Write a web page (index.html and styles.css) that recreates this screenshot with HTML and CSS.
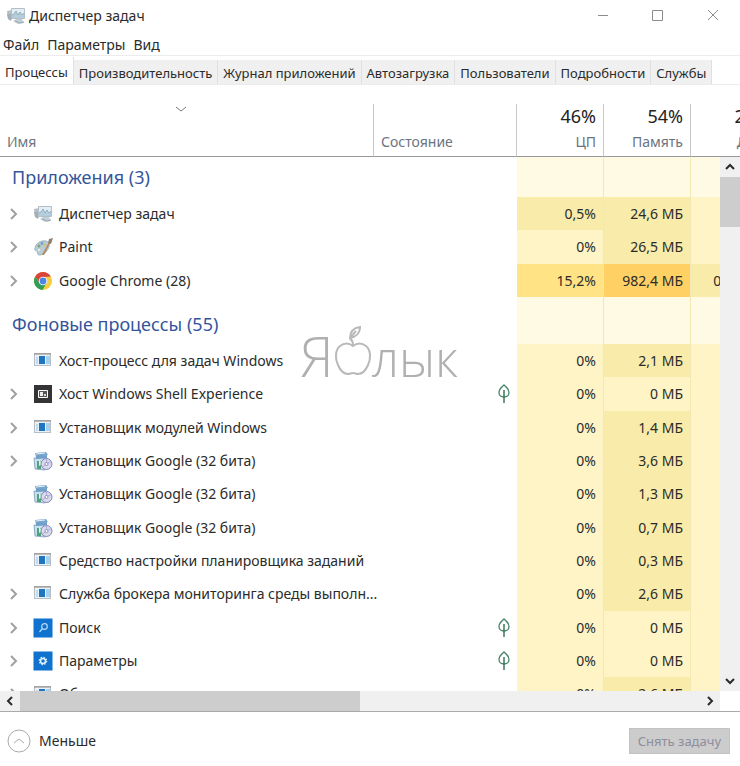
FILE: index.html
```html
<!DOCTYPE html>
<html lang="ru">
<head>
  <meta charset="UTF-8">
  <title>Диспетчер задач</title>
  <meta name="viewport" content="width=device-width, initial-scale=1.0">
  <link rel="stylesheet" href="styles.css">
</head>
<body>
  <!-- icons -->
  <svg class="sprite" aria-hidden="true">
    <symbol id="i-taskmgr" viewBox="0 0 20 20">
      <path d="M1 5l5-1v10l-4-1z" fill="#b4bec4"/>
      <path d="M1 8l4 0v7l-3-2z" fill="#a3aeb5"/>
      <rect x="5" y="2" width="14" height="11" rx="1" fill="#b3bfc6"/>
      <rect x="6" y="3" width="12" height="9" fill="#e2eef4"/>
      <path d="M6 9l2-1 2-3 2 4 2-3 2 3 2-2v5H6z" fill="#b3cddc"/>
      <path d="M6 9l2-1 2-3 2 4 2-3 2 3 2-2" fill="none" stroke="#86a3b5" stroke-width=".8"/>
      <path d="M10 13h6l2 4-6 1-5-3z" fill="#c3cdd3"/>
      <path d="M9 15l5 2 4-1" fill="none" stroke="#93abbb"/>
    </symbol>
    <symbol id="i-paint" viewBox="0 0 20 20">
      <path d="M2 11c1-5 6-8 11-7 4 1 4 5 2 8-2 4-5 6-9 6-2 0-1-3-2-4s-3 0-2-3z" fill="#bacbd3" stroke="#94a8b2" stroke-width=".8"/>
      <circle cx="6" cy="9" r="1.5" fill="#79a779"/>
      <circle cx="9" cy="6.500" r="1.400" fill="#6b9fce"/>
      <circle cx="6" cy="13" r="1.300" fill="#e2ebef"/>
      <circle cx="12" cy="8" r="1.300" fill="#d6c071"/>
      <path d="M9 18L16 5l1 1-6 12z" fill="#b28455"/>
      <path d="M15 6l1-4 4-1-2 6z" fill="#8f8071"/>
    </symbol>
    <symbol id="i-chrome" viewBox="0 0 20 20">
      <circle cx="10" cy="10" r="9" fill="#f6cd3d"/>
      <path d="M2.200 5.500A9 9 0 0 1 17.800 5.500L10 6 6.500 12z" fill="#da4439"/>
      <path d="M2.200 5.500A9 9 0 0 0 9.500 19L13.500 12 6.500 12z" fill="#2f9e58"/>
      <circle cx="10" cy="10" r="4.300" fill="#fff"/>
      <circle cx="10" cy="10" r="3.400" fill="#4c85e6"/>
    </symbol>
    <symbol id="i-app" viewBox="0 0 20 20">
      <rect x="1.500" y="2.500" width="16" height="12" fill="#e9f1f7" stroke="#b7c0c7"/>
      <path d="M1 3h17" stroke="#91867f"/>
      <rect x="6" y="5" width="6" height="8" fill="#1f75c0"/>
      <rect x="3" y="6" width="2" height="7" fill="#c1dcef"/>
      <rect x="13" y="5" width="4" height="8" fill="#a5d1ee"/>
    </symbol>
    <symbol id="i-shell" viewBox="0 0 20 20">
      <rect x="1" y="1" width="18" height="18" fill="#343436"/>
      <path d="M5.500 6.500h9v7h-9z" fill="#555" stroke="#fff"/>
      <rect x="7" y="8" width="3" height="4" fill="#eee"/>
      <rect x="11" y="10" width="2" height="2" fill="#ddd"/>
    </symbol>
    <symbol id="i-setup" viewBox="0 0 20 20">
      <path d="M2 2l11-1 2 3-12 2z" fill="#78a5ca"/>
      <path d="M3 3l9-1" stroke="#e4f2fb"/>
      <path d="M1 7h11v12l-10-1z" fill="#c7deed" stroke="#7a9bb7" stroke-width=".8"/>
      <path d="M3 5l11-1v3L3 8z" fill="#6f9fc8"/>
      <path d="M4 10h4v8H4z" fill="#52a37c"/>
      <path d="M6 9l4 4-4 2z" fill="#dff3e9"/>
      <circle cx="13.500" cy="13" r="5.500" fill="#d8d9ed" stroke="#8589b7"/>
      <path d="M13.500 7.500v5l5-2M13.500 13l-4 3" stroke="#adadda" fill="none"/>
      <circle cx="13.500" cy="13" r="1.500" fill="#fff" stroke="#807fad" stroke-width=".8"/>
    </symbol>
    <symbol id="i-search" viewBox="0 0 20 20">
      <rect x=".5" y=".5" width="19" height="19" fill="#0f72ce"/>
      <circle cx="11.500" cy="8.500" r="2.800" fill="none" stroke="#b8dafa" stroke-width="1.200"/>
      <path d="M9.500 10.500l-3 3.500" stroke="#b8dafa" stroke-width="1.200"/>
    </symbol>
    <symbol id="i-settings" viewBox="0 0 20 20">
      <rect x=".5" y=".5" width="19" height="19" fill="#0f72ce"/>
      <circle cx="10" cy="10" r="3.700" fill="none" stroke="#e3f2ff" stroke-width="1.200" stroke-dasharray="1.450 1.450"/>
      <circle cx="10" cy="10" r="2.500" fill="none" stroke="#e3f2ff" stroke-width="1.500"/>
    </symbol>
    <symbol id="i-leaf" viewBox="0 0 12 20">
      <path d="M6 1C4 3 1 5 1 8.500c0 2.500 2 4.500 5 4.500s5-2 5-4.500C11 5 8 3 6 1z" fill="none" stroke="#468568" stroke-width="1.300"/>
      <path d="M6 6v13" stroke="#387858" stroke-width="1.500"/>
    </symbol>
    <symbol id="i-expand" viewBox="0 0 10 12">
      <path d="M2 1l5 5-5 5" fill="none" stroke="#a0a0a0" stroke-width="2"/>
    </symbol>
    <symbol id="i-up" viewBox="0 0 12 12">
      <path d="M2 8l4-4 4 4" fill="none" stroke="currentColor" stroke-width="2"/>
    </symbol>
  </svg>

  <div class="window">
    <header class="titlebar">
      <svg class="icon"><use href="#i-taskmgr"/></svg>
      <span class="title">Диспетчер задач</span>
      <button class="win-btn" aria-label="Свернуть"><svg viewBox="0 0 12 12"><path d="M1 5.500h10"/></svg></button>
      <button class="win-btn" aria-label="Развернуть"><svg viewBox="0 0 12 12"><path d="M.5 .5h10v10H.5z"/></svg></button>
      <button class="win-btn" aria-label="Закрыть"><svg viewBox="0 0 12 12"><path d="M1 0l10 10M11 0L1 10"/></svg></button>
    </header>

    <nav class="menu">
      <button>Файл</button>
      <button>Параметры</button>
      <button>Вид</button>
    </nav>

    <div class="tabs" role="tablist">
      <button class="tab active" role="tab" aria-selected="true">Процессы</button>
      <button class="tab" role="tab">Производительность</button>
      <button class="tab" role="tab">Журнал приложений</button>
      <button class="tab" role="tab">Автозагрузка</button>
      <button class="tab" role="tab">Пользователи</button>
      <button class="tab" role="tab">Подробности</button>
      <button class="tab" role="tab">Службы</button>
    </div>

    <main class="list">
      <table class="processes">
        <colgroup>
          <col>
          <col class="col-state">
          <col class="col-num">
          <col class="col-num">
          <col class="col-num">
        </colgroup>
        <thead>
          <tr>
            <th class="left"><svg class="sort" viewBox="0 0 12 12"><path d="M1 3l5 4 5-4"/></svg>Имя</th>
            <th class="left">Состояние</th>
            <th><b>46%</b>ЦП</th>
            <th><b>54%</b>Память</th>
            <th><b>28%</b>Диск</th>
          </tr>
        </thead>
        <tbody>
          <tr class="group"><th>Приложения (3)</th><td></td><td></td><td></td><td></td></tr>
          <tr>
            <td><div class="name"><button class="expand" aria-label="Развернуть"><svg><use href="#i-expand"/></svg></button><svg class="icon"><use href="#i-taskmgr"/></svg><span>Диспетчер задач</span></div></td>
            <td></td><td class="h2">0,5%</td><td class="h2">24,6 МБ</td><td></td>
          </tr>
          <tr>
            <td><div class="name"><button class="expand" aria-label="Развернуть"><svg><use href="#i-expand"/></svg></button><svg class="icon"><use href="#i-paint"/></svg><span>Paint</span></div></td>
            <td></td><td>0%</td><td class="h2">26,5 МБ</td><td></td>
          </tr>
          <tr>
            <td><div class="name"><button class="expand" aria-label="Развернуть"><svg><use href="#i-expand"/></svg></button><svg class="icon"><use href="#i-chrome"/></svg><span>Google Chrome (28)</span></div></td>
            <td></td><td class="h3">15,2%</td><td class="h4">982,4 МБ</td><td class="h2">0,1 МБ/с</td>
          </tr>
        </tbody>
        <tbody>
          <tr class="group second"><th>Фоновые процессы (55)</th><td></td><td></td><td></td><td></td></tr>
          <tr>
            <td><div class="name"><span class="expand"></span><svg class="icon"><use href="#i-app"/></svg><span>Хост-процесс для задач Windows</span></div></td>
            <td></td><td>0%</td><td class="h2">2,1 МБ</td><td></td>
          </tr>
          <tr>
            <td><div class="name"><button class="expand" aria-label="Развернуть"><svg><use href="#i-expand"/></svg></button><svg class="icon"><use href="#i-shell"/></svg><span>Хост Windows Shell Experience</span></div></td>
            <td><svg class="leaf"><use href="#i-leaf"/></svg></td><td>0%</td><td>0 МБ</td><td></td>
          </tr>
          <tr>
            <td><div class="name"><button class="expand" aria-label="Развернуть"><svg><use href="#i-expand"/></svg></button><svg class="icon"><use href="#i-app"/></svg><span>Установщик модулей Windows</span></div></td>
            <td></td><td>0%</td><td class="h2">1,4 МБ</td><td></td>
          </tr>
          <tr>
            <td><div class="name"><button class="expand" aria-label="Развернуть"><svg><use href="#i-expand"/></svg></button><svg class="icon"><use href="#i-setup"/></svg><span>Установщик Google (32 бита)</span></div></td>
            <td></td><td>0%</td><td class="h2">3,6 МБ</td><td></td>
          </tr>
          <tr>
            <td><div class="name"><span class="expand"></span><svg class="icon"><use href="#i-setup"/></svg><span>Установщик Google (32 бита)</span></div></td>
            <td></td><td>0%</td><td class="h2">1,3 МБ</td><td></td>
          </tr>
          <tr>
            <td><div class="name"><span class="expand"></span><svg class="icon"><use href="#i-setup"/></svg><span>Установщик Google (32 бита)</span></div></td>
            <td></td><td>0%</td><td class="h2">0,7 МБ</td><td></td>
          </tr>
          <tr>
            <td><div class="name"><span class="expand"></span><svg class="icon"><use href="#i-app"/></svg><span>Средство настройки планировщика заданий</span></div></td>
            <td></td><td>0%</td><td class="h2">0,3 МБ</td><td></td>
          </tr>
          <tr>
            <td><div class="name"><button class="expand" aria-label="Развернуть"><svg><use href="#i-expand"/></svg></button><svg class="icon"><use href="#i-app"/></svg><span>Служба брокера мониторинга среды выполн...</span></div></td>
            <td></td><td>0%</td><td class="h2">2,6 МБ</td><td></td>
          </tr>
          <tr>
            <td><div class="name"><button class="expand" aria-label="Развернуть"><svg><use href="#i-expand"/></svg></button><svg class="icon"><use href="#i-search"/></svg><span>Поиск</span></div></td>
            <td><svg class="leaf"><use href="#i-leaf"/></svg></td><td>0%</td><td>0 МБ</td><td></td>
          </tr>
          <tr>
            <td><div class="name"><button class="expand" aria-label="Развернуть"><svg><use href="#i-expand"/></svg></button><svg class="icon"><use href="#i-settings"/></svg><span>Параметры</span></div></td>
            <td><svg class="leaf"><use href="#i-leaf"/></svg></td><td>0%</td><td>0 МБ</td><td></td>
          </tr>
          <tr>
            <td><div class="name"><button class="expand" aria-label="Развернуть"><svg><use href="#i-expand"/></svg></button><svg class="icon"><use href="#i-app"/></svg><span>Обмен</span></div></td>
            <td></td><td>0%</td><td class="h2">2,6 МБ</td><td></td>
          </tr>
        </tbody>
      </table>

      <div class="vscroll">
        <button aria-label="Вверх"><svg><use href="#i-up"/></svg></button>
        <div class="thumb"></div>
        <button class="down" aria-label="Вниз"><svg><use href="#i-up"/></svg></button>
      </div>

      <div class="watermark">
        <span class="big">Я</span>
        <svg viewBox="0 0 38 52">
          <path d="M19 21c-4-3-9-3-13 0-5 4-5 13-2 19 3 7 6 9 10 9 2 0 3-1 5-1s3 1 5 1c4 0 7-2 10-9 3-6 3-15-2-19-4-3-9-3-13 0z"/>
          <path d="M19 20c0-3-1-5-3-6M16 13c0-6 3-10 10-11 0 6-4 10-10 11zM16 13l6-7"/>
        </svg>
        <span class="small">лык</span>
      </div>
    </main>

    <div class="hscroll">
      <button class="prev" aria-label="Влево"><svg><use href="#i-up"/></svg></button>
      <div class="track"><div class="thumb"></div></div>
      <button class="next" aria-label="Вправо"><svg><use href="#i-up"/></svg></button>
    </div>

    <footer class="footer">
      <button class="less"><svg viewBox="0 0 24 24"><circle cx="12" cy="12" r="11"/><path d="M7 14l5-4 5 4"/></svg>Меньше</button>
      <button class="end-task" disabled>Снять задачу</button>
    </footer>
  </div>
</body>
</html>
```
FILE: styles.css
```css
* {
  box-sizing: border-box;
}
body {
  margin: 0;
  font-family: "Noto Sans", "Open Sans", sans-serif;
  font-size: 14px;
  line-height: 20px;
  color: #2b2b2b;
  background: #fff;
}
button {
  font: inherit;
  color: inherit;
  background: none;
  border: none;
  padding: 0;
}
.sprite {
  display: none;
}
.icon {
  width: 20px;
  height: 20px;
  flex: none;
}
.window {
  display: flex;
  flex-direction: column;
  height: 100vh;
  overflow: hidden;
}

/* title and menu */
.titlebar {
  display: flex;
  align-items: center;
  height: 32px;
  padding-left: 6px;
}
.title {
  flex: 1;
  margin-left: 3px;
}
.win-btn {
  width: 55px;
  height: 30px;
}
.win-btn svg {
  width: 12px;
  height: 12px;
  display: block;
  margin: auto;
  fill: none;
  stroke: #8c8c8c;
}
.menu {
  display: flex;
  gap: 8px;
  height: 24px;
  padding: 3px;
  border-bottom: 1px solid #ececec;
}

/* tabs */
.tabs {
  display: flex;
  align-items: flex-end;
  height: 29px;
  margin-bottom: 19px;
  border-bottom: 1px solid #ececec;
}
.tab {
  height: 24px;
  padding: 2px 5px 0;
  font-size: 13px;
  background: #f0f0f0;
  border-right: 1px solid #e0e0e0;
  white-space: nowrap;
}
.tab.active {
  height: 27px;
  background: #fff;
}

/* process table */
.list {
  position: relative;
  flex: 1;
  min-height: 0;
  overflow: hidden;
}
.processes {
  width: calc(100% + 38px);
  table-layout: fixed;
  border-collapse: separate;
  border-spacing: 0;
}
.col-state {
  width: 143px;
}
.col-num {
  width: 87px;
}
.processes thead th {
  position: relative;
  height: 53px;
  padding: 0 7px 4px;
  vertical-align: bottom;
  text-align: right;
  font-weight: normal;
  color: #6b7480;
  border-right: 1px solid #c8c8c8;
  border-bottom: 1px solid #999;
}
.processes thead th.left {
  text-align: left;
}
.processes thead b {
  display: block;
  margin-bottom: 4px;
  font-size: 18px;
  line-height: 24px;
  font-weight: normal;
  color: #222;
}
.sort {
  position: absolute;
  top: 0;
  left: 47%;
  width: 12px;
  height: 12px;
  fill: none;
  stroke: #777;
}
.processes td {
  height: 33px;
  padding: 0 7px;
  text-align: right;
  white-space: nowrap;
}
.processes tr:nth-child(3n) td {
  height: 34px;
}
.processes td:nth-child(n+3) {
  background: #fff4c6;
  border-right: 1px solid #f3e8b4;
}
.processes td:first-child {
  padding-left: 9px;
}
.processes .group td,
.processes .group th {
  height: 40px;
}
.processes .second td,
.processes .second th {
  height: 47px;
}
.processes .group td:nth-child(n+3) {
  background: #fffae4;
}
.group th {
  padding: 0 0 8px 12px;
  vertical-align: bottom;
  text-align: left;
  white-space: nowrap;
  font-size: 18px;
  line-height: 24px;
  font-weight: normal;
  color: #34559b;
}
.processes td.h2 {
  background: #f9eba9;
}
.processes td.h3 {
  background: #ffe385;
}
.processes td.h4 {
  background: #ffd064;
}
.name {
  display: flex;
  align-items: center;
}
.name span:last-child {
  margin-left: 6px;
}
.expand {
  flex: none;
  width: 24px;
  height: 12px;
  text-align: left;
}
.expand svg {
  display: block;
  width: 10px;
  height: 12px;
}
.leaf {
  display: block;
  width: 12px;
  height: 20px;
  margin-left: auto;
}

/* scroll bars */
.vscroll {
  position: absolute;
  top: 53px;
  right: 0;
  bottom: 0;
  width: 20px;
  display: flex;
  flex-direction: column;
  background: #f0f0f0;
}
.vscroll button,
.hscroll button {
  width: 20px;
  height: 20px;
  padding: 4px;
}
.vscroll svg,
.hscroll svg {
  display: block;
  width: 12px;
  height: 12px;
}
.vscroll .thumb {
  height: 50px;
  background: #cdcdcd;
}
.vscroll .down {
  margin-top: auto;
  transform: rotate(180deg);
}
.hscroll {
  display: flex;
  height: 20px;
  margin-right: 20px;
  background: #f0f0f0;
}
.hscroll .track {
  flex: 1;
}
.hscroll .thumb {
  width: 50%;
  height: 20px;
  background: #cdcdcd;
}
.hscroll .prev {
  transform: rotate(-90deg);
}
.hscroll .next {
  transform: rotate(90deg);
}

/* logo over the list */
.watermark {
  position: absolute;
  top: 221px;
  left: 300px;
  display: flex;
  align-items: baseline;
  font-family: "Open Sans", "Noto Sans", sans-serif;
  font-weight: 300;
  line-height: 60px;
  color: #b0b0b0;
  pointer-events: none;
}
.watermark .big {
  font-size: 56px;
}
.watermark .small {
  font-size: 50px;
}
.watermark svg {
  width: 38px;
  height: 52px;
  margin-bottom: -3px;
  fill: none;
  stroke: #b9b9b9;
  stroke-width: 2;
}

/* footer */
.footer {
  display: flex;
  align-items: center;
  justify-content: space-between;
  height: 55px;
  padding: 4px 10px 0 7px;
  border-top: 1px solid #aaa;
}
.less {
  display: flex;
  align-items: center;
  gap: 8px;
}
.less svg {
  width: 24px;
  height: 24px;
  fill: none;
  stroke: #aaa;
}
.end-task {
  height: 26px;
  padding: 0 8px;
  font-size: 13px;
  background: #ccc;
  border: 1px solid #c2c2c2;
  color: #8e8e9c;
}
```
